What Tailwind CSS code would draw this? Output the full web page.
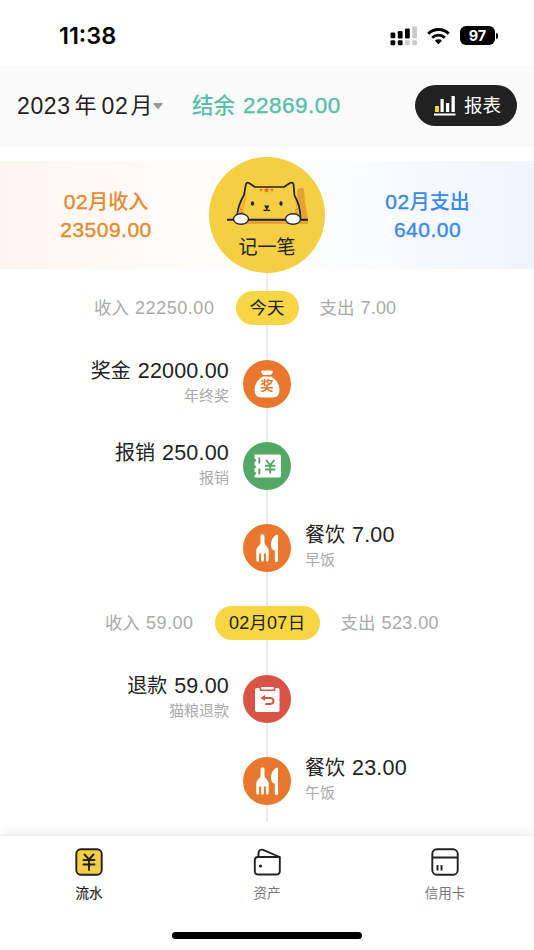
<!DOCTYPE html>
<html lang="zh-CN">
<head>
<meta charset="utf-8">
<meta name="viewport" content="width=device-width, initial-scale=1">
<title>流水</title>
<script src="https://cdn.jsdelivr.net/npm/@tailwindcss/browser@4"></script>
</head>
<body class="bg-white">
<svg class="hidden">
  <symbol id="cutlery" viewBox="0 0 48 48">
    <path fill="#fff" d="M17.500 12.300a2 2 0 0 1 4 0V18.500c0 3 4.200 4.500 4.200 8v9.800a1.400 1.400 0 0 1-2.800 0V29.500h-2v6.800a1.400 1.400 0 0 1-2.800 0v-6.800h-2v6.800a1.400 1.400 0 0 1-2.800 0V26.500c0-3.500 4.200-5 4.200-8zM35 12v24.500a1.600 1.600 0 0 1-3.200 0v-9.800c-2.600-.8-3.800-2.700-3.800-5.700 0-4.500 2-8.500 5.500-10.200.8-.3 1.500.2 1.500 1.200z"/>
  </symbol>
</svg>
<div class="flex h-[950px] w-[534px] flex-col overflow-hidden bg-white font-['Liberation_Sans','Noto_Sans_CJK_SC',sans-serif] text-[#222]">

  <!-- Status bar -->
  <div class="flex h-[65px] shrink-0 items-center justify-between pt-[6px] pl-[59px] pr-[36px]">
    <div class="font-['Inter',sans-serif] text-[23.500px] leading-none font-semibold text-black">11:38</div>
    <div class="flex items-center">
      <svg class="mr-[10px] h-[20px] w-[28px]" viewBox="0 0 28 20">
        <g fill="#000"><rect x="1.500" y="6.500" width="4.800" height="5.800" rx="1.300"/><rect x="8.800" y="5" width="4.800" height="7.500" rx="1.300"/><rect x="16" y="2.500" width="4.800" height="10" rx="1.300"/><rect x="1.500" y="14.300" width="4.800" height="5" rx="1.300"/><rect x="8.800" y="14.300" width="4.800" height="5" rx="1.300"/></g>
        <g fill="#cbcbcb"><rect x="23.200" y="0.500" width="4.800" height="11.800" rx="1.300"/><rect x="16" y="14.300" width="4.800" height="5" rx="1.300"/><rect x="23.200" y="14.300" width="4.800" height="5" rx="1.300"/></g>
      </svg>
      <svg class="mr-[10px] h-[18px] w-[23px]" viewBox="0 0 23 18" fill="none" stroke="#000" stroke-width="2.900">
        <path d="M1.300 6.700a14.500 14.500 0 0 1 20.400 0"/><path d="M5.200 10.700a9 9 0 0 1 12.600 0"/><path fill="#000" stroke="none" d="M8 13.700a5 5 0 0 1 7 0L11.500 17.300z"/>
      </svg>
      <div class="flex h-[19px] w-[35px] items-center justify-center rounded-[6px] bg-black pt-px font-['Inter',sans-serif] text-[14.500px] font-bold leading-none text-white">97</div>
      <div class="ml-px h-[6px] w-[2px] rounded-r-full bg-black"></div>
    </div>
  </div>

  <!-- Month selector and balance -->
  <div class="flex h-[82px] shrink-0 items-center bg-[#fafafa] pl-[17px] pr-[17px]">
    <div class="flex w-[175px] items-center whitespace-nowrap text-[22px] leading-[30px]">
      <span class="text-[23px] tracking-[0.600px]">2023</span><span class="ml-[4px]">年</span><span class="ml-[5px] text-[23px] tracking-[0.600px]">02</span><span class="ml-[2px] w-[22px]">月</span>
      <svg class="ml-px h-[6px] w-[10px]" viewBox="0 0 10 6"><path fill="#999" d="M1 0h8q1.200.3.400 1.300L6 5.300q-1 1-2 0L.6 1.300Q-.2.300 1 0z"/></svg>
    </div>
    <div class="flex items-center whitespace-nowrap leading-[30px] text-[#5bbfa9]">
      <span class="text-[21.500px] font-medium">结余</span><span class="ml-[8px] text-[22.500px] tracking-[0.500px] [-webkit-text-stroke:0.400px_#5bbfa9]">22869.00</span>
    </div>
    <div class="ml-auto -mt-[1px] flex h-[41px] w-[102px] items-center rounded-full bg-[#212121] pl-[19px] text-[18.500px] text-white">
      <svg class="mr-[8px] h-[21px] w-[22px]" viewBox="0 0 22 21"><rect x="1" y="11" width="4" height="6" fill="#f7d03e"/><path fill="#fff" d="M6.500 4h3.200v13H6.500zM12 8h3.200v9H12zM17.500 1h3.300v16h-3.300zM0 18.500h21.500v2H0z"/></svg>
      <span>报表</span>
    </div>
  </div>

  <!-- Monthly totals -->
  <div class="mt-[14px] grid h-[108px] shrink-0 grid-cols-[1fr_116px_1fr] grid-rows-[108px] items-center bg-linear-to-r from-[#fff5ee] via-white to-[#eff5ff]">
    <div class="mt-[1px] pl-[3px] text-center text-[#e78a30]">
      <div class="text-[20px] leading-[28px] font-medium"><span class="text-[21px] tracking-[0.500px] [-webkit-text-stroke:0.400px_#e78a30]">02</span>月收入</div>
      <div class="text-[21px] tracking-[0.500px] leading-[28px] [-webkit-text-stroke:0.400px_#e78a30]">23509.00</div>
    </div>
    <button class="relative z-10 -my-[4px] flex size-[116px] flex-col items-center rounded-full bg-[#f4cf43]">
      <svg class="mt-[20px] h-[50px] w-[86px]" viewBox="0 0 86 50">
        <path fill="#e3a234" d="M73 13q4-4 7-1l1 13 3 17H75zM20 42h64v5H20z"/>
        <path fill="#f4cf43" d="M13 42q0-12 7-24l2-11q1-2 3-1l6 4h29l6-4q3-1 3.500 1.500l1 11q6 10 6 23.500z"/>
        <path fill="#eeb23b" d="M14.500 41q0-11 6-21l2-6q0 9-2 14-2 5 0 13zM68 14l3 6q4 11 4 21h-2q0-16-5-27z"/>
        <path fill="none" stroke="#222" stroke-width="1.700" stroke-linejoin="round" d="M13 39q1-11 7-21l2-11q1-2 3-1l6 4h29l6-4q3-1 3.500 1.500l1 11q6 10 6 23.500"/>
        <circle cx="42.500" cy="13.300" r="2.100" fill="#e9781d"/><circle cx="37" cy="13" r="1.300" fill="#e9781d"/><circle cx="48" cy="13" r="1.300" fill="#e9781d"/>
        <path stroke="#e9781d" d="M16 32l3 1m-3 3 3-1m55-3-3 1m3 3-3-1"/>
        <ellipse cx="28.500" cy="26.500" rx="1.600" ry="2.300" fill="#222"/><ellipse cx="57" cy="26.500" rx="1.600" ry="2.300" fill="#222"/>
        <path fill="#222" d="M40 28.500h5.500l-1.700 3h-2z"/><path fill="none" stroke="#222" stroke-width="1.200" d="M42.800 31v1.500q-1.500 1.800-3.300.5m3.300-.5q1.500 1.800 3.300.5"/>
        <path stroke="#222" stroke-width="1.900" d="M3 42.700h81"/>
        <ellipse cx="17" cy="42" rx="7.500" ry="5.300" fill="#fff" stroke="#222" stroke-width="1.400"/><ellipse cx="69" cy="42" rx="7.500" ry="5.300" fill="#fff" stroke="#222" stroke-width="1.400"/>
      </svg>
      <span class="mt-[7px] text-[19px] leading-[28px] text-[#222]">记一笔</span>
    </button>
    <div class="mt-[1px] pr-[4px] text-center text-[#3a89ee]">
      <div class="text-[20px] leading-[28px] font-medium"><span class="text-[21px] tracking-[0.500px] [-webkit-text-stroke:0.400px_#3a89ee]">02</span>月支出</div>
      <div class="text-[21px] tracking-[0.500px] leading-[28px] [-webkit-text-stroke:0.400px_#3a89ee]">640.00</div>
    </div>
  </div>

  <!-- Timeline -->
  <div class="relative flex h-[553px] shrink-0 flex-col pt-[22px]">
    <div class="absolute top-0 left-[266px] h-full w-[2px] bg-[#ececec]"></div>

    <div class="relative grid h-[34px] grid-cols-[1fr_auto_1fr] items-center gap-[21px] text-[17.500px] text-[#aaa]">
      <div class="flex items-center justify-end gap-[6px]"><span>收入</span><span class="text-[18px] tracking-[0.550px]">22250.00</span></div>
      <div class="flex h-[34px] w-[63px] items-center justify-center rounded-full bg-[#f6d645] text-[17.500px] text-[#222]">今天</div>
      <div class="flex items-center gap-[6px]"><span>支出</span><span class="text-[18px] tracking-[0.200px]">7.00</span></div>
    </div>

    <div class="relative mt-[34px] grid h-[49px] grid-cols-[1fr_48px_1fr] items-center gap-[14px]">
      <div class="-mt-[1px] flex flex-col items-end">
        <div class="flex gap-[7px] text-[20px] leading-[25px]"><span>奖金</span><span class="text-[21.500px] tracking-[0.200px]">22000.00</span></div>
        <div class="text-[15px] leading-[24px] text-[#aaa]">年终奖</div>
      </div>
      <div class="flex size-[48px] items-center justify-center rounded-full bg-[#e9772e]">
        <div class="relative flex h-[28px] w-[26px] items-end justify-center">
          <svg class="absolute inset-0 size-full" viewBox="0 0 26 28"><path fill="#fff" d="M8 .5h10q1.500.5.700 2L17 5H9L7.300 2.500Q6.500 1 8 .5zM9 6.500h8q8 4.500 8.500 13 0 8-7 8h-11q-7 0-7-8Q1 11 9 6.500z"/></svg>
          <span class="relative mb-[5px] text-[13px] leading-[14px] font-bold text-[#e9772e]">奖</span>
        </div>
      </div>
    </div>

    <div class="relative mt-[33px] grid h-[49px] grid-cols-[1fr_48px_1fr] items-center gap-[14px]">
      <div class="-mt-[1px] flex flex-col items-end">
        <div class="flex gap-[7px] text-[20px] leading-[25px]"><span>报销</span><span class="text-[21.500px] tracking-[0.200px]">250.00</span></div>
        <div class="text-[15px] leading-[24px] text-[#aaa]">报销</div>
      </div>
      <svg class="size-[48px]" viewBox="0 0 48 48"><circle cx="24" cy="24" r="24" fill="#53a866"/>
        <path fill="#fff" d="M11.500 12.500H36q2 0 2 2v19q0 2-2 2H11.500V33q3.500-1.500 0-3.500v-3q3.500-1.700 0-3.500v-3q3.500-1.700 0-3.500z"/>
        <path fill="none" stroke="#53a866" stroke-width="1.900" d="M16.300 15.500v6m0 5v6M23 18l4.200 5 4.200-5M27.200 22.500V31.500M22 23.700h10.400M22 27.500h10.400"/></svg>
    </div>

    <div class="relative mt-[33px] grid h-[49px] grid-cols-[1fr_48px_1fr] items-center gap-[14px]">
      <svg class="col-start-2 size-[48px] rounded-full bg-[#e9772e]"><use href="#cutlery"/></svg>
      <div class="-mt-[1px]">
        <div class="flex gap-[7px] text-[20px] leading-[25px]"><span>餐饮</span><span class="text-[21.500px] tracking-[0.200px]">7.00</span></div>
        <div class="text-[15px] leading-[24px] text-[#aaa]">早饭</div>
      </div>
    </div>

    <div class="relative mt-[34px] grid h-[34px] grid-cols-[1fr_auto_1fr] items-center gap-[21px] text-[17.500px] text-[#aaa]">
      <div class="flex items-center justify-end gap-[6px]"><span>收入</span><span class="text-[18px] tracking-[0.500px]">59.00</span></div>
      <div class="flex h-[34px] w-[105px] items-center justify-center rounded-full bg-[#f6d645] text-[17.500px] text-[#222]"><span class="text-[18px] tracking-[0.300px]">02</span>月<span class="text-[18px] tracking-[0.300px]">07</span>日</div>
      <div class="flex items-center gap-[6px]"><span>支出</span><span class="text-[18px] tracking-[0.400px]">523.00</span></div>
    </div>

    <div class="relative mt-[34px] grid h-[49px] grid-cols-[1fr_48px_1fr] items-center gap-[14px]">
      <div class="-mt-[1px] flex flex-col items-end">
        <div class="flex gap-[7px] text-[20px] leading-[25px]"><span>退款</span><span class="text-[21.500px] tracking-[0.200px]">59.00</span></div>
        <div class="text-[15px] leading-[24px] text-[#aaa]">猫粮退款</div>
      </div>
      <svg class="size-[48px]" viewBox="0 0 48 48"><circle cx="24" cy="24" r="24" fill="#d95445"/>
        <path fill="#fff" d="M14 13h2.500v1.500q0 1.500 1.500 1.500h13q1.500 0 1.500-1.500V13H35q1.500 0 1.500 1.500v21q0 1.500-1.500 1.500H14q-2 0-2-2V15q0-2 2-2zM18.500 12h12q1.500 1.500-.5 2.500H19q-2-1-.5-2.500z"/>
        <path fill="none" stroke="#d95445" stroke-width="2" stroke-linecap="round" stroke-linejoin="round" d="M20 23h7.500q3 .3 3 3t-3 3h-4.500"/><path fill="#d95445" d="M17.500 23l4.500-3v6z"/></svg>
    </div>

    <div class="relative mt-[33px] grid h-[49px] grid-cols-[1fr_48px_1fr] items-center gap-[14px]">
      <svg class="col-start-2 size-[48px] rounded-full bg-[#e9772e]"><use href="#cutlery"/></svg>
      <div class="-mt-[1px]">
        <div class="flex gap-[7px] text-[20px] leading-[25px]"><span>餐饮</span><span class="text-[21.500px] tracking-[0.200px]">23.00</span></div>
        <div class="text-[15px] leading-[24px] text-[#aaa]">午饭</div>
      </div>
    </div>
  </div>

  <!-- Tab bar -->
  <div class="relative mt-[14px] h-[114px] shrink-0 bg-white shadow-[0_0_14px_rgba(0,0,0,0.130)]">
    <div class="grid grid-cols-3 pt-[12px] text-[13.500px] leading-[20px] text-[#777]">
      <div class="flex flex-col items-center text-[#222]">
        <svg class="mb-[8px] size-[28px]" viewBox="0 0 28 28" fill="none" stroke="#222" stroke-width="1.900" stroke-linecap="round" stroke-linejoin="round"><rect x="1.300" y="1.300" width="25.400" height="25.400" rx="4.500" fill="#f4cf43"/><path d="M9.500 6.500l4.500 5 4.500-5M14 11.500V22M8.500 12h11M8.500 16.500h11"/></svg>
        <span class="[-webkit-text-stroke:0.200px_#222]">流水</span>
      </div>
      <div class="flex flex-col items-center">
        <svg class="mb-[8px] size-[28px]" viewBox="0 0 28 28" fill="none" stroke="#222" stroke-width="1.900" stroke-linejoin="round"><path d="M4.500 9q-2.700.4-2.700 3v11q0 3.500 3.500 3.500h18q3.500 0 3.500-3.500V9zM5.500 9V4.500Q6.500.8 10 1.800L26.800 9"/><circle cx="7.500" cy="18" r="1.600" fill="#222" stroke="none"/></svg>
        <span>资产</span>
      </div>
      <div class="flex flex-col items-center">
        <svg class="mb-[8px] size-[28px]" viewBox="0 0 28 28" fill="none" stroke="#222" stroke-width="1.900"><rect x="1.300" y="1.300" width="25.400" height="25.400" rx="4.500"/><path d="M1.300 9.500h25.400M6.500 17v5.500m4-5.500v5.500"/></svg>
        <span>信用卡</span>
      </div>
    </div>
    <div class="mx-auto mt-[28px] h-[7px] w-[190px] rounded-full bg-black"></div>
  </div>
</div>
</body>
</html>
